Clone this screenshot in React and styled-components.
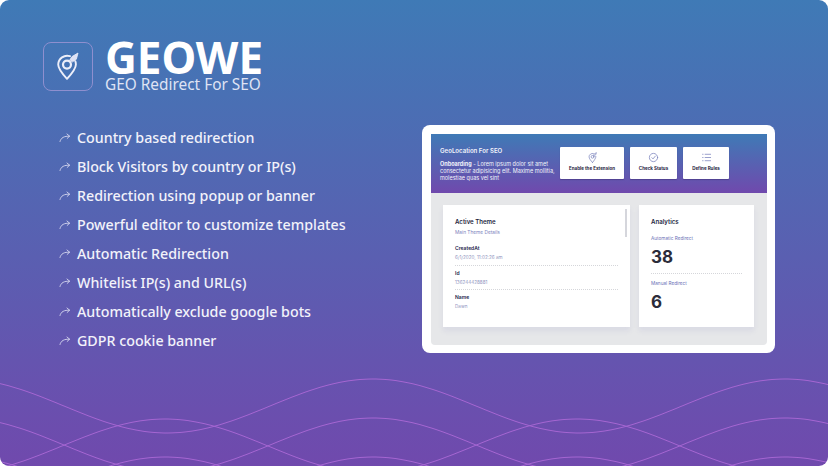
import React from 'react';
import styled, { createGlobalStyle } from 'styled-components';

const Global = createGlobalStyle`
  html, body { margin: 0; padding: 0; background: #fff; }
  body { width: 828px; height: 466px; overflow: hidden; font-family: "Noto Sans", sans-serif; }
`;
const Page = styled.div`
  position: relative; width: 828px; height: 466px; overflow: hidden; box-sizing: border-box;
  border-radius: 9px; padding: 41px 53px 0 43px;
  background: linear-gradient(180deg, #3f7ab6 0%, #7049ad 100%);
  display: flex; flex-direction: column;
`;
const Waves = styled.svg`position: absolute; left: 0; top: 0; width: 828px; height: 466px; pointer-events: none;`;
const Brand = styled.header`display: flex; align-items: center; gap: 12px; height: 50px; position: relative;`;
const LogoBox = styled.div`
  width: 50px; height: 49px; border: 1px solid #8e8fcf; border-radius: 8px; box-sizing: border-box;
  display: flex; align-items: center; justify-content: center;
`;
const BrandText = styled.div`display: flex; flex-direction: column; color: #fff;`;
const BrandName = styled.div`font-size: 44px; font-weight: 700; line-height: 36px;`;
const BrandSub = styled.div`font-size: 15.4px; line-height: 17px; color: #dfe3f4; margin-top: 1px; white-space: nowrap;`;
const Main = styled.div`display: flex; justify-content: space-between; position: relative; margin-top: 32px;`;
const Features = styled.ul`list-style: none; margin: 0; padding: 0 0 0 16px; display: flex; flex-direction: column; width: 310px;`;
const Feature = styled.li`
  display: flex; align-items: center; gap: 6px; height: 29px; color: #f2f2fa; font-size: 14.25px; font-weight: 500; white-space: nowrap;
`;
const Preview = styled.section`
  width: 353px; height: 228px; margin-top: 2px; background: #fff; border-radius: 8px; box-sizing: border-box; padding: 9px 8px 8px 9px;
  display: flex; flex-direction: column;
`;
const Hero = styled.div`
  height: 59px; box-sizing: border-box; background: linear-gradient(180deg, #3f7ab6, #7049ad); display: flex; justify-content: space-between;
  padding: 13px 38px 0 9px; flex: none;
`;
const HeroText = styled.div`width: 118px; color: #f2f3fb;`;
const HeroTitle = styled.div`font: 600 6.1px/8px Inter, sans-serif; white-space: nowrap;`;
const HeroBody = styled.p`font: 400 5.5px/7px Inter, sans-serif; margin: 6px 0 0; white-space: nowrap; b { font-weight: 700; }`;
const Buttons = styled.div`display: flex; gap: 6px; height: 32px;`;
const ActionButton = styled.div`
  width: ${p => p.$w}px; background: #fff; border-radius: 1px; box-shadow: 0 1px 1px rgba(40,30,90,.35);
  display: flex; flex-direction: column; align-items: center; gap: 3px; padding-top: 5px; box-sizing: border-box;
  color: #7d85bd; font: 700 4.5px/6px Inter, sans-serif;
  span { color: #1e2140; white-space: nowrap; }
`;
const Body = styled.div`
  flex: 1; background: #e6e7e9; border-radius: 0 0 4px 4px; padding: 12px 13px 18px 12px; display: grid;
  grid-template-columns: 187px 115px; gap: 9px; min-height: 0;
`;
const Card = styled.div`
  background: #fff; padding: 13px 12px 0; position: relative; min-height: 0;
  box-shadow: 0 4px 5px rgba(110,110,190,.1);
`;
const CardTitle = styled.div`font: 600 6.1px/8px Inter, sans-serif; color: #1d1f3e;`;
const CardSub = styled.div`font: 400 4.8px/6px Inter, sans-serif; color: #7e84bd; margin-top: 3px; margin-bottom: 10px;`;
const ScrollThumb = styled.div`position: absolute; right: 3px; top: 4px; width: 2px; height: 28px; background: #d5d6dc;`;
const Field = styled.div`
  padding-bottom: 3.5px; margin-bottom: 4px;
  border-bottom: ${p => p.$last ? 'none' : '1px dotted #d5d6da'};
`;
const FieldLabel = styled.div`font: 600 5px/7px Inter, sans-serif; color: #22244a;`;
const FieldValue = styled.div`font: 400 4.6px/6px Inter, sans-serif; color: #8f94c0; margin-top: 3px;`;
const StatLabel = styled.div`font: 400 4.7px/6px Inter, sans-serif; color: #6a71b6; margin-top: ${p => p.$mt}px;`;
const StatValue = styled.div`font: 700 17px/20px Inter, sans-serif; color: #2b2c3a; margin-top: 6px;`;
const Rule = styled.div`border-bottom: 1px dotted #d5d6da; margin-top: 6px;`;

const features = [
  'Country based redirection', 'Block Visitors by country or IP(s)', 'Redirection using popup or banner',
  'Powerful editor to customize templates', 'Automatic Redirection', 'Whitelist IP(s) and URL(s)',
  'Automatically exclude google bots', 'GDPR cookie banner',
];
const wave = (c, a, peak) => {
  let d = '';
  for (let x = -4; x <= 832; x += 4) {
    const y = c - a * Math.cos(2 * Math.PI * (x - peak) / 412);
    d += (d ? 'L' : 'M') + x + ' ' + y.toFixed(1);
  }
  return d;
};
const waves = [[406, 27, 373], [445, 27, 373], [484, 27, 373], [446, 27, 165], [484, 27, 165]];

const Arrow = () => (
  <svg width="12" height="10" viewBox="0 0 12 10" fill="none" stroke="#d6d8ef" strokeWidth="0.9" strokeLinecap="round" strokeLinejoin="round">
    <path d="M1 8.5C2 4.6 5 3 10.5 3.2M8 1l2.6 2.2L8.2 5.4" />
  </svg>
);
const Logo = () => (
  <svg width="22" height="28" viewBox="0 0 22 28" fill="none" stroke="#eceef9" strokeLinecap="round" strokeLinejoin="round">
    <path d="M13 4.2A9 9 0 0 0 1.2 12.5C1.2 17 6 22.5 10 26.8 14 22.5 18.9 17 18.9 12.5c0-1.2-.2-2.3-.6-3.3" strokeWidth="1.9" />
    <circle cx="10" cy="12.6" r="4" strokeWidth="2.2" />
    <path d="M12.6 8.2 15 4.6 21 1l-1.6 6.2-3.8 2.6z" fill="#dfe2f5" strokeWidth="0.8" />
  </svg>
);
const PinSmall = () => (
  <svg width="11" height="11" viewBox="0 0 24 24" fill="none" stroke="currentColor" strokeWidth="1.6" strokeLinecap="round" strokeLinejoin="round">
    <path d="M12 23C8 18 4.5 14.5 4.5 10.5A7.5 7.5 0 0 1 14 3.3M19.4 9.5c.4 3.6-3.4 8.5-7.4 13.5" />
    <circle cx="12" cy="10.5" r="3" />
    <path d="M14.5 7 16 4l4.5-2.5L19 6l-3 2.5z" />
  </svg>
);
const Check = () => (
  <svg width="11" height="11" viewBox="0 0 24 24" fill="none" stroke="currentColor" strokeWidth="1.7" strokeLinecap="round" strokeLinejoin="round">
    <circle cx="12" cy="12" r="9" /><path d="m8.5 12.5 2.5 2.5 5-6" />
  </svg>
);
const Rules = () => (
  <svg width="11" height="11" viewBox="0 0 24 24" fill="none" stroke="currentColor" strokeWidth="1.7" strokeLinecap="round">
    <path d="M9 5h12M9 12h12M9 19h12M3.5 5h1M3.5 12h1M3.5 19h1" />
  </svg>
);

export default function App() {
  return (
    <Page>
      <Global />
      <Waves viewBox="0 0 828 466" fill="none">
        {waves.map(([c, a, p]) => <path key={c + '-' + p} d={wave(c, a, p)} stroke="#a566d2" strokeWidth="1" />)}
      </Waves>
      <Brand>
        <LogoBox><Logo /></LogoBox>
        <BrandText>
          <BrandName>GEOWE</BrandName>
          <BrandSub>GEO Redirect For SEO</BrandSub>
        </BrandText>
      </Brand>
      <Main>
        <Features>
          {features.map(f => <Feature key={f}><Arrow />{f}</Feature>)}
        </Features>
        <Preview>
          <Hero>
            <HeroText>
              <HeroTitle>GeoLocation For SEO</HeroTitle>
              <HeroBody><b>Onboarding</b> - Lorem ipsum dolor sit amet<br />consectetur adipisicing elit. Maxime mollitia,<br />molestiae quas vel sint</HeroBody>
            </HeroText>
            <Buttons>
              <ActionButton $w={64}><PinSmall /><span>Enable the Extension</span></ActionButton>
              <ActionButton $w={47}><Check /><span>Check Status</span></ActionButton>
              <ActionButton $w={46}><Rules /><span>Define Rules</span></ActionButton>
            </Buttons>
          </Hero>
          <Body>
            <Card>
              <ScrollThumb />
              <CardTitle>Active Theme</CardTitle>
              <CardSub>Main Theme Details</CardSub>
              <Field>
                <FieldLabel>CreatedAt</FieldLabel>
                <FieldValue>6/1/2020, 11:02:26 am</FieldValue>
              </Field>
              <Field>
                <FieldLabel>Id</FieldLabel>
                <FieldValue>136244428881</FieldValue>
              </Field>
              <Field $last>
                <FieldLabel>Name</FieldLabel>
                <FieldValue>Dawn</FieldValue>
              </Field>
            </Card>
            <Card>
              <CardTitle>Analytics</CardTitle>
              <StatLabel $mt={9}>Automatic Redirect</StatLabel>
              <StatValue>38</StatValue>
              <Rule />
              <StatLabel $mt={6}>Manual Redirect</StatLabel>
              <StatValue>6</StatValue>
            </Card>
          </Body>
        </Preview>
      </Main>
    </Page>
  );
}
